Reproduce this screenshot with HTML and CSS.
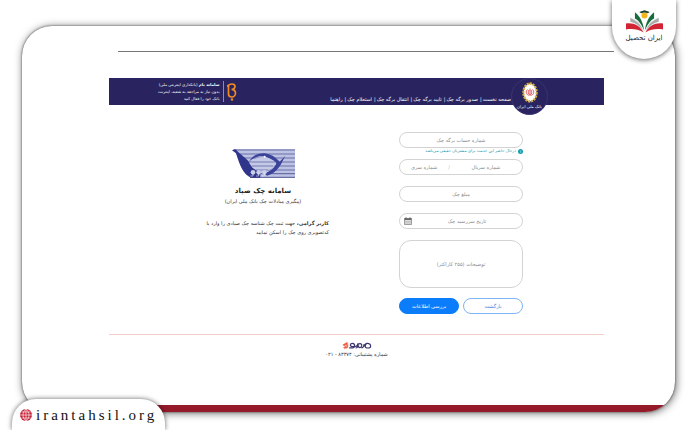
FILE: index.html
```html
<!DOCTYPE html>
<html lang="fa" dir="rtl">
<head>
  <meta charset="UTF-8" />
  <meta name="viewport" content="width=device-width, initial-scale=1.0" />
  <title>سامانه چک صیاد</title>
  <link rel="stylesheet" href="styles.css">
</head>
<body>
  <div class="frame">
    <hr class="top-line">

    <div class="page">
      <header class="header">
        <nav class="nav">
          <a href="#">صفحه نخست</a>
          <a href="#">صدور برگه چک</a>
          <a href="#">تایید برگه چک</a>
          <a href="#">انتقال برگه چک</a>
          <a href="#">استعلام چک</a>
          <a href="#">راهنما</a>
        </nav>
        <div class="bam">
          <svg class="bam-logo" viewBox="0 0 20 36">
            <path d="M9 28C5 28 3 26 3 22V5M1 6c3-3 6-4 9-4 4 0 6 2 6 5s-3 6-7 6c5 0 8 3 8 7s-3 8-7 8" fill="none" stroke="#f08a24" stroke-width="3.4" stroke-linecap="round"/>
            <circle cx="10" cy="33" r="2.4" fill="#f08a24"/>
          </svg>
          <p class="bam-text"><strong>سامانه بام</strong> (بانکداری اینترنتی ملی)<br>بدون نیاز به مراجعه به شعبه، اینترنت<br>بانک خود را فعال کنید</p>
        </div>
        <div class="bank-badge">
          <svg class="bank-logo" viewBox="0 0 32 42">
            <ellipse cx="16" cy="21" rx="13" ry="18" fill="#fff" stroke="#d3ad45" stroke-width="5" stroke-dasharray="4 2"/>
            <ellipse cx="16" cy="21" rx="11" ry="15" fill="#fff"/>
            <path d="M11 15c-4 4-3 9 2 12M21 15c4 4 3 9-2 12M16 13v15M14 16c-2 4-2 7 1 10M18 16c2 4 2 7-1 10" fill="none" stroke="#e0525a" stroke-width="2"/>
          </svg>
          <span>بانک ملی ایران</span>
        </div>
      </header>

      <main class="content">
        <form class="form">
          <input class="field" type="text" aria-label="شماره حساب برگه چک" placeholder="شماره حساب برگه چک">
          <p class="hint"><i class="hint-icon">i</i>درحال حاضر این خدمت برای مشتریان حقیقی می‌باشد</p>
          <div class="field serial">
            <input type="text" aria-label="شماره سریال" placeholder="شماره سریال">
            <span>/</span>
            <input type="text" aria-label="شماره سری" placeholder="شماره سری">
          </div>
          <input class="field" type="text" aria-label="مبلغ چک" placeholder="مبلغ چک">
          <div class="field date">
            <input type="text" aria-label="تاریخ سررسید چک" placeholder="تاریخ سررسید چک">
            <svg class="calendar" viewBox="0 0 16 16">
              <path d="M1 3h14v12H1z" fill="#eee" stroke="#777" stroke-width="1.4"/>
              <path d="M1 2.500h14V6H1z" fill="#666"/>
              <path d="M4 .5v3M12 .5v3" stroke="#666" stroke-width="2"/>
              <path d="M3 8.500h10M3 12h10" stroke="#777" stroke-width="2" stroke-dasharray="2 2"/>
            </svg>
          </div>
          <textarea class="field note" aria-label="توضیحات" placeholder="توضیحات (۲۵۵ کاراکتر)"></textarea>
          <div class="buttons">
            <button class="button button-outline" type="button">بازگشت</button>
            <button class="button" type="submit">بررسی اطلاعات</button>
          </div>
        </form>

        <section class="intro">
          <svg class="sayad-logo" viewBox="0 0 189 87">
            <path d="M8 0h181v87H58C30 76 24 40 8 0z" fill="#bcc2e3"/>
            <path d="M10 3h179M14 15h175M18 27h171M24 39h165M28 51h161M34 63h155M42 74h147M54 85h135" stroke="#6a6fa5" stroke-width="3.500"/>
            <path d="M0 4L9 0l6 5c18 19 35 26 38 39 7 12 19 21 34 23l-3 19H57C34 76 24 51 12 13z" fill="#30358c"/>
            <path d="M51 38C67 8 108 2 138 33l5 5 17-18-10 20c-7 16-22 34-45 40l-8-7c17-5 29-15 36-29-29-30-59-28-82-6z" fill="#3b429a"/>
            <path d="M56 39c22-20 52-21 77 3-13 23-47 37-71 14-5-6-7-11-6-17z" fill="#c4c9e7"/>
            <path d="M58 39h72M60 51h63M71 63h38" stroke="#737aae" stroke-width="3"/>
            <circle cx="98" cy="23" r="3" fill="#fff"/>
            <g fill="#c7cce8"><circle cx="63" cy="70" r="7"/><circle cx="80" cy="70" r="7"/><circle cx="97" cy="70" r="7"/></g>
            <path d="M63 70v11h-8M80 70v11h-8M97 70v11h-8" fill="none" stroke="#dfe2f2" stroke-width="2"/>
          </svg>
          <h1>سامانه چک صیاد</h1>
          <p class="subtitle">(پیگیری مبادلات چک بانک ملی ایران)</p>
          <p class="guide"><strong>کاربر گرامی،</strong> جهت ثبت چک شناسه چک صیادی را وارد یا<br>کدتصویری روی چک را اسکن نمایید</p>
        </section>
      </main>

      <footer class="footer">
        <svg class="sadad-logo" viewBox="0 0 88 26">
          <path d="M3 11l12-7v5l-9 5zM5 19l11-7v5l-8 5zM12 21l5-3V7" fill="#f05a3c" stroke="#f05a3c" stroke-width="2"/>
          <path d="M21 20h10c9 0 7-13 0-13-8 0-9 9-1 9h9c6 0 7-4 8-9M40 20c5 0 7-5 7-11 9-4 13 1 10 7-3 5-10 4-8-3M57 20c5 0 7-5 8-11M66 16c-1-12 18-12 18-1 0 7-16 7-16 0 0-3 2-6 5-9" fill="none" stroke="#39366d" stroke-width="3.500"/>
        </svg>
        <p>شماره پشتیبانی: ۸۳۳۷۴ - ۰۲۱</p>
      </footer>
    </div>
  </div>

  <div class="corner-logo">
    <svg class="book" viewBox="0 0 112 68">
      <path d="M0 40c20-4 42 5 53 27C36 56 17 56 0 58zM112 40c-20-4-42 5-53 27 17-11 36-11 53-9z" fill="#d12435"/>
      <path d="M13 22c20 7 35 22 41 43C43 48 29 38 13 35zM99 22C79 29 64 44 58 65c11-17 25-27 41-30z" fill="#aaa"/>
      <path d="M27 6c17 13 26 34 28 57C47 42 38 31 27 25zM85 6C68 19 59 40 57 63c8-21 17-32 28-38z" fill="#176b3d"/>
      <path d="M13 22c20 9 34 20 41 43M99 22C79 31 65 42 58 65" fill="none" stroke="#fff" stroke-width="2"/>
      <circle cx="56" cy="16" r="9" fill="#f4b51c"/>
      <path d="M40 5l16-5 16 5-6 4c-6-3-14-3-20 0z" fill="#183f2b"/>
    </svg>
    <span>ایران تحصیل</span>
  </div>

  <a class="site-tab" href="#" dir="ltr">
    <svg class="globe" viewBox="0 0 24 24">
      <circle cx="12" cy="12" r="12" fill="#c92036"/>
      <path d="M0 12h24M12 0v24M3 6h18M3 18h18M12 0C4 7 4 17 12 24M12 0c8 7 8 17 0 24" fill="none" stroke="#fff" stroke-width="1.300"/>
    </svg>
    <span>irantahsil.org</span>
  </a>
</body>
</html>
```
FILE: styles.css
```css
* {
  margin: 0;
  padding: 0;
  box-sizing: border-box;
}

body {
  min-height: 100vh;
  display: flex;
  padding: 26px 25px 18px 22px;
  position: relative;
  background: #fff;
  color: #333;
  font-family: "DejaVu Sans", sans-serif;
  font-size: 5px;
  line-height: 9px;
}

a {
  color: inherit;
  text-decoration: none;
}

.frame {
  flex: 1;
  padding: 25px 71px 31px 87px;
  border-radius: 30px;
  background: linear-gradient(#941a2a, #941a2a) bottom / 100% 7px no-repeat;
  box-shadow: 0 0 2px #444, 1px 1px 8px rgba(0, 0, 0, 0.6);
}

.top-line {
  border: 0;
  border-top: 1px solid #777;
  margin: 0 -10px 26px 9px;
}

/* header */
.header {
  position: relative;
  display: flex;
  justify-content: space-between;
  height: 27px;
  padding: 0 93px 0 49px;
  background: #29245f;
  color: #fff;
}

.nav {
  display: flex;
  align-items: flex-end;
  padding-bottom: 1px;
  white-space: nowrap;
}

.nav a + a::before {
  content: "|";
  margin: 0 1px 0 2px;
}

.bam {
  display: flex;
  align-items: center;
  gap: 3px;
}

.bam-logo {
  width: 10px;
  height: 18px;
}

.bam-text {
  padding-right: 3px;
  border-right: 1px solid #8f8bb0;
  font-size: 4px;
  line-height: 7px;
  white-space: nowrap;
}

.bank-badge {
  position: absolute;
  top: 0;
  right: 56px;
  width: 37px;
  height: 37px;
  padding-top: 3px;
  border-radius: 50%;
  border: 1px solid #393471;
  background: #29245f;
  text-align: center;
  font-size: 4px;
  line-height: 7px;
  white-space: nowrap;
}

.bank-logo {
  display: block;
  width: 16px;
  height: 21px;
  margin: 0 auto;
}

/* content */
.content {
  display: flex;
  gap: 70px;
  padding: 27px 81px 20px 0;
}

.form {
  flex: 0 0 124px;
  min-width: 0;
}

.field {
  display: block;
  width: 100%;
  height: 16px;
  margin-bottom: 11px;
  border: 1px solid #d3d3d3;
  border-radius: 8px;
  background: #fff;
}

input,
textarea,
button {
  font-family: inherit;
  font-size: 5px;
  text-align: center;
}

input,
textarea {
  outline: none;
  color: #555;
}

::placeholder {
  color: #888;
}

.field:first-child {
  margin-bottom: 0;
}

.hint {
  display: flex;
  align-items: center;
  gap: 2px;
  height: 6px;
  margin-bottom: 5px;
  color: #2391a5;
  font-size: 4px;
  line-height: 6px;
  white-space: nowrap;
}

.hint-icon {
  width: 5px;
  height: 5px;
  border-radius: 50%;
  background: #159bb0;
  color: #fff;
  font-style: normal;
  line-height: 5px;
  text-align: center;
}

.serial,
.date {
  display: flex;
  align-items: center;
}

.serial input,
.date input {
  flex: 1;
  width: 0;
  min-width: 0;
  height: 14px;
  border: 0;
  background: none;
}

.serial input:first-child {
  flex-grow: 1.5;
}

.serial span {
  color: #bbb;
}

.date {
  padding-left: 4px;
}

.calendar {
  width: 8px;
  height: 8px;
}

.note {
  height: 48px;
  margin-bottom: 10px;
  padding-top: 20px;
  border-radius: 12px;
  resize: none;
}

.buttons {
  display: flex;
  gap: 4px;
}

.button {
  flex: 1;
  height: 16px;
  border: 1px solid #0b7dfb;
  border-radius: 8px;
  background: #0b7dfb;
  color: #fff;
  white-space: nowrap;
}

.button-outline {
  border-color: #7db4f5;
  background: #fff;
  color: #3c83dc;
}

.intro {
  flex: 0 0 132px;
  padding-top: 17px;
  text-align: center;
  white-space: nowrap;
}

.sayad-logo {
  display: block;
  width: 63px;
  height: 29px;
  margin: 0 auto 8px;
}

.intro h1 {
  color: #222;
  font-size: 7px;
  line-height: 11px;
}

.subtitle {
  margin-bottom: 13px;
}

.guide {
  text-align: right;
}

/* footer */
.footer {
  border-top: 1px solid #f3cfc9;
  padding-top: 6px;
  text-align: center;
}

.sadad-logo {
  display: block;
  width: 30px;
  height: 9px;
  margin: 0 auto;
}

/* site branding */
.corner-logo {
  position: absolute;
  top: 0;
  right: 24px;
  width: 64px;
  height: 59px;
  padding-top: 10px;
  border-radius: 0 0 32px 32px;
  background: #fff;
  box-shadow: 0 1px 5px rgba(0, 0, 0, 0.6);
  color: #222;
  font-size: 7px;
  text-align: center;
  white-space: nowrap;
}

.book {
  display: block;
  width: 37px;
  height: 23px;
  margin: 0 auto 1px;
}

.site-tab {
  position: absolute;
  bottom: 0;
  left: 12px;
  display: flex;
  align-items: center;
  gap: 4px;
  height: 31px;
  padding: 0 8px;
  border-radius: 24px 24px 0 0;
  background: #fff;
  box-shadow: 0 0 5px rgba(0, 0, 0, 0.6);
  color: #111;
  font-family: "Liberation Serif", serif;
  font-size: 15px;
  line-height: 18px;
  letter-spacing: 3px;
}

.globe {
  width: 12px;
  height: 12px;
}
```
